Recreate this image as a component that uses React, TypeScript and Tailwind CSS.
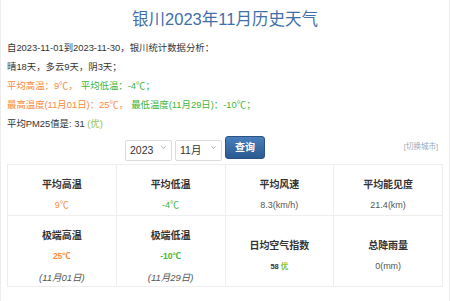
import { ChevronDown } from "lucide-react";

const font = { fontFamily: '"Liberation Sans", "Noto Sans CJK SC", sans-serif' };

const Select = ({ value, options, width }: { value: string; options: string[]; width: string }) => (
  <div className={`relative ${width} h-[21px]`}>
    <select
      defaultValue={value}
      className="appearance-none w-full h-full border border-[#dcdcdc] rounded-[2px] bg-white pl-[4px] text-[10.5px] text-[#333] outline-none"
      style={font}
    >
      {options.map((o) => (
        <option key={o}>{o}</option>
      ))}
    </select>
    <ChevronDown className="absolute right-[5px] top-[7px] w-[7px] h-[7px] text-[#666] pointer-events-none" strokeWidth={2} />
  </div>
);

const Cell = ({ children, tall }: { children: React.ReactNode; tall?: boolean }) => (
  <div
    className={`border-r border-b border-[#eee] flex flex-col items-center justify-center pt-[10px] ${
      tall ? "h-[71px]" : "h-[51px]"
    }`}
  >
    {children}
  </div>
);

const Head = ({ children }: { children: React.ReactNode }) => (
  <div className="leading-[21px] text-[10px] font-bold text-[#333]">{children}</div>
);

// value line, colour + size passed whole so classes never fight
const Val = ({ children, className = "text-[9px] text-[#555]" }: { children: React.ReactNode; className?: string }) => (
  <div className={`leading-[21px] ${className}`}>{children}</div>
);

export default function App() {
  const orange = "text-[#fa8a3c]";
  const green = "text-[#3bb53b] ml-[3px]";

  return (
    <div className="w-[450px] h-[301px] bg-white border-x border-[#ececec] px-[6px] overflow-hidden" style={font}>
      <h1 className="text-center text-[16.5px] leading-[38px] text-[#3f6fa8]">银川2023年11月历史天气</h1>

      <div className="text-[9.4px] leading-[19px] text-[#333]">
        <p>自2023-11-01到2023-11-30，银川统计数据分析：</p>
        <p>晴18天，多云9天，阴3天；</p>
        <p>
          <span className={orange}>平均高温：9℃，</span>
          <span className={green}>平均低温：-4℃；</span>
        </p>
        <p>
          <span className={orange}>最高温度(11月01日)：25℃，</span>
          <span className={green}>最低温度(11月29日)：-10℃；</span>
        </p>
        <p>
          平均PM25值是: 31 <span className="text-[#8cc152]">(优)</span>
        </p>
      </div>

      <div className="flex items-center mt-[3px] h-[22px]">
        <div className="flex items-center gap-[3px] ml-[118px]">
          <Select value="2023" options={["2022", "2023", "2024"]} width="w-[47px]" />
          <Select value="11月" options={["10月", "11月", "12月"]} width="w-[47px]" />
          <button className="w-[40px] h-[23px] rounded-[3px] border border-[#2a5384] bg-gradient-to-b from-[#4a7fbc] to-[#2a5a91] text-white text-[10px] font-bold">
            查询
          </button>
        </div>
        <a className="ml-auto mr-[5px] text-[7.5px] text-[#9aaabb]">[切换城市]</a>
      </div>

      <div className="grid grid-cols-4 w-[436px] mt-[6px] border-l border-t border-[#eee]">
        <Cell>
          <Head>平均高温</Head>
          <Val className="text-[9px] text-[#fa8a3c]">9℃</Val>
        </Cell>
        <Cell>
          <Head>平均低温</Head>
          <Val className="text-[9px] text-[#3bb53b]">-4℃</Val>
        </Cell>
        <Cell>
          <Head>平均风速</Head>
          <Val>8.3(km/h)</Val>
        </Cell>
        <Cell>
          <Head>平均能见度</Head>
          <Val>21.4(km)</Val>
        </Cell>

        <Cell tall>
          <Head>极端高温</Head>
          <Val className="text-[8.5px] font-bold text-[#fa8a3c]">25℃</Val>
          <Val className="text-[9.5px] italic text-[#555]">(11月01日)</Val>
        </Cell>
        <Cell tall>
          <Head>极端低温</Head>
          <Val className="text-[8.5px] font-bold text-[#3bb53b]">-10℃</Val>
          <Val className="text-[9.5px] italic text-[#555]">(11月29日)</Val>
        </Cell>
        <Cell tall>
          <Head>日均空气指数</Head>
          <Val className="text-[7.5px] font-bold text-[#333]">
            58 <span className="text-[#86c232]">优</span>
          </Val>
        </Cell>
        <Cell tall>
          <Head>总降雨量</Head>
          <Val>0(mm)</Val>
        </Cell>
      </div>
    </div>
  );
}
